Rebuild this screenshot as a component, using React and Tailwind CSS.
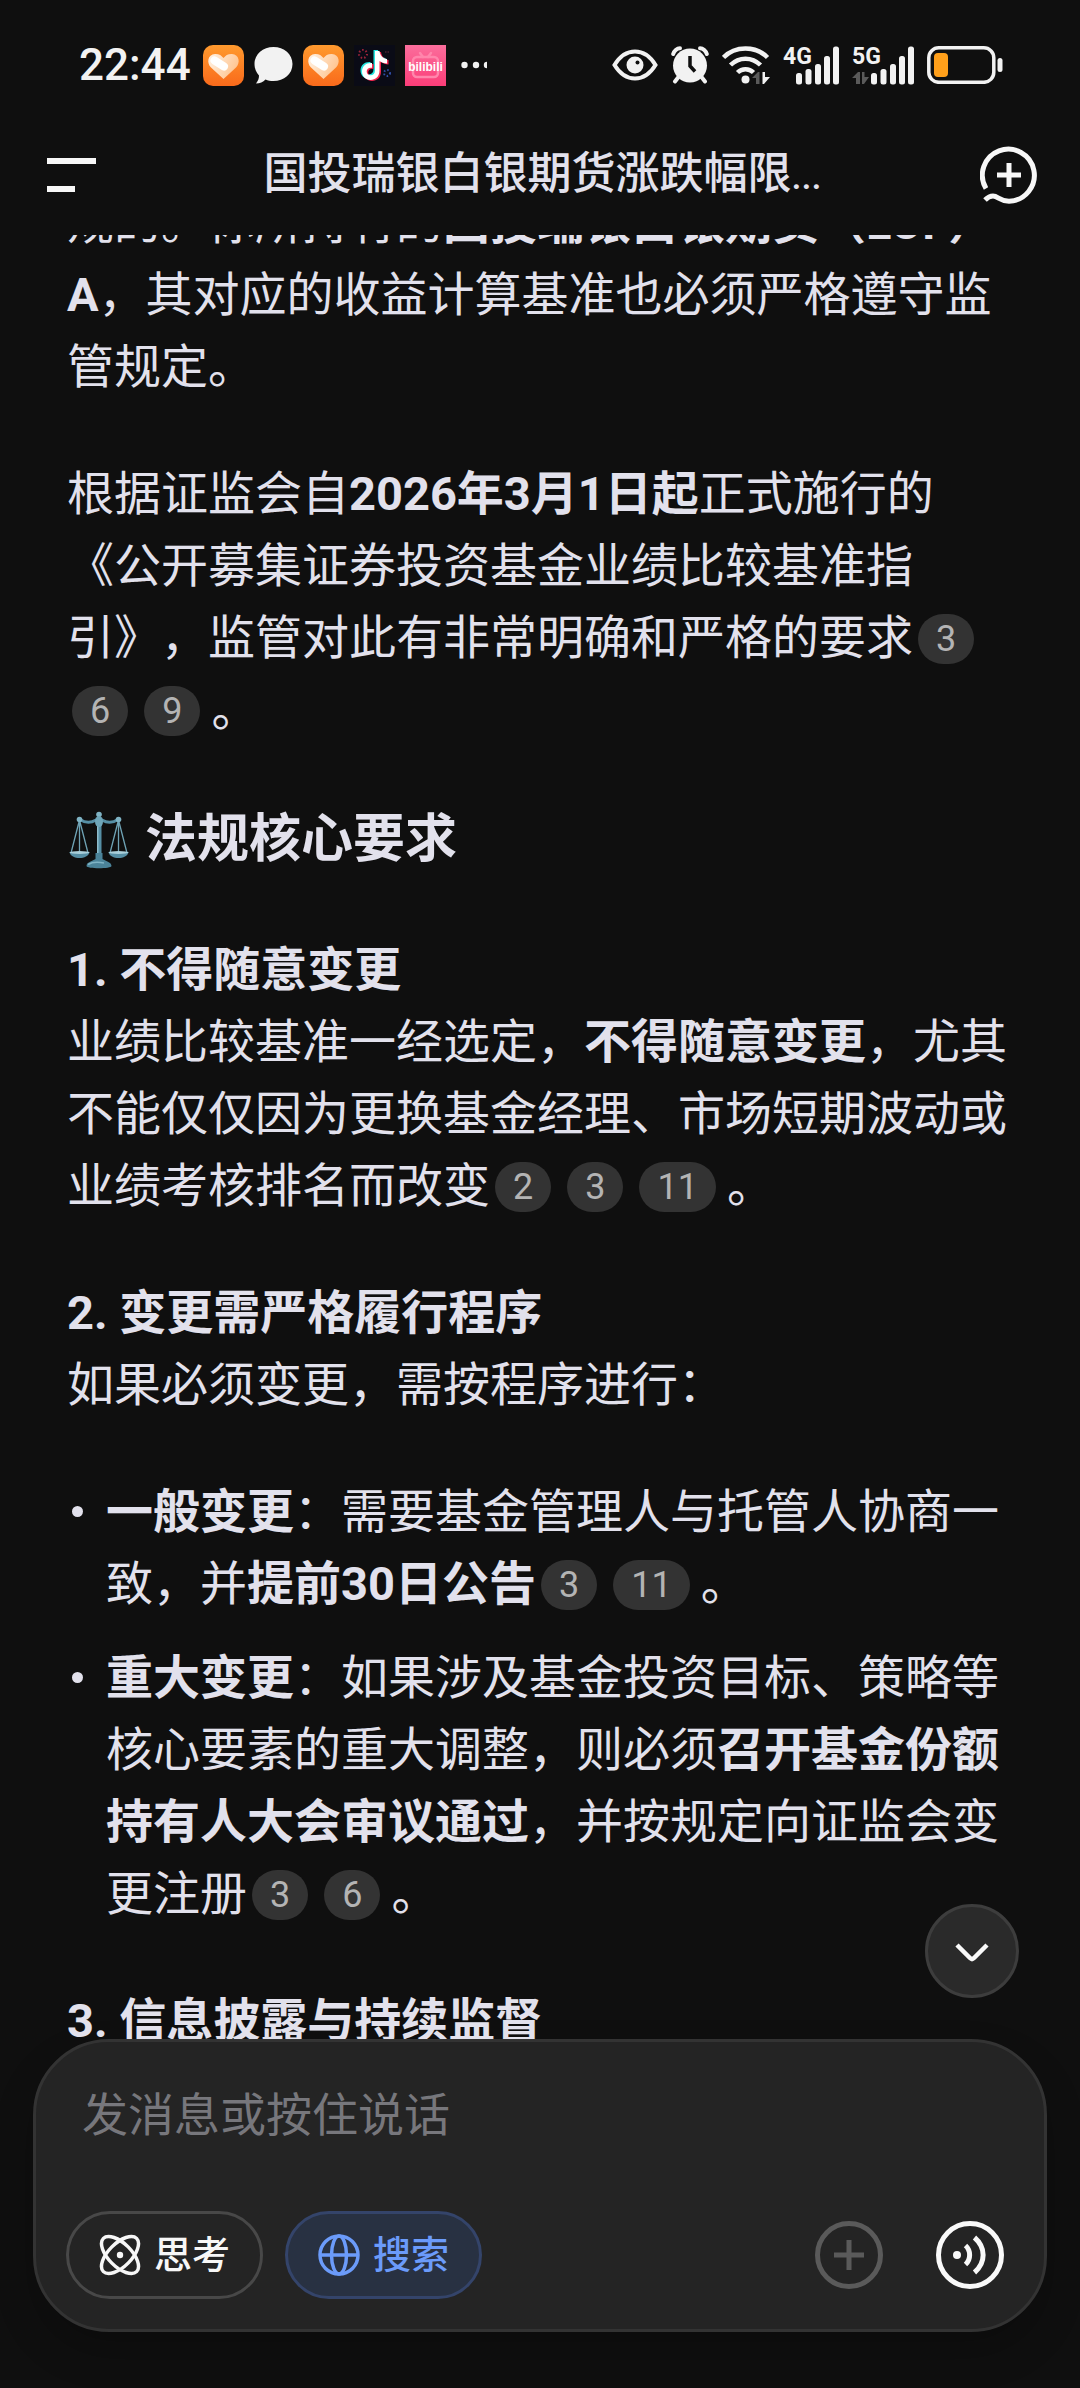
import { useState } from "react";

const HeartAppIcon = () => (
    <svg className="w-[41px] h-[41px]" viewBox="0 0 41 41">
        <defs>
            <linearGradient id="heartBg" x1="0" y1="0" x2="0" y2="1">
                <stop offset="0" stopColor="#ff9a2e" />
                <stop offset="1" stopColor="#f96a1b" />
            </linearGradient>
            <linearGradient id="heartFill" x1="0" y1="0" x2="1" y2="0.4">
                <stop offset="0" stopColor="#fff3e6" />
                <stop offset="1" stopColor="#ffc591" />
            </linearGradient>
        </defs>
        <rect width="41" height="41" rx="10" fill="url(#heartBg)" />
        <path
            d="M20.5 34 L8 22.5 C3.5 18 4.5 9.5 12 9 C16 8.8 18.5 10.5 20.5 13 C22.5 10.5 25 8.8 29 9 C36.5 9.5 37.5 18 33 22.5 Z"
            fill="url(#heartFill)"
        />
        <path d="M11.5 15.5 L21 21.5" stroke="#fff" strokeWidth="8" strokeLinecap="round" />
    </svg>
);

const BubbleIcon = () => (
    <svg className="w-[39px] h-[38px]" viewBox="0 0 39 38" fill="#f2f2f2">
        <path d="M19.5 1 C30 1 38.5 8 38.5 18 C38.5 28 30 35 19.5 35 C16.5 35 14 34.5 11.5 33.5 C9 36 6 37.5 2 37.5 C4 35 5 32.5 5 29.5 C2.2 26.5 0.5 22.5 0.5 18 C0.5 8 9 1 19.5 1 Z" />
    </svg>
);

const NOTE_PATH =
    "M21 6 H25.5 C26 10.5 29 13.5 33 14 V18.5 C30 18.5 27.5 17.5 25.5 16 V25.5 C25.5 31.5 21.5 35 16.5 35 C11.5 35 8 31 8 26.5 C8 21 12.5 17.5 18 18 V22.8 C15 22.2 12.7 24 12.7 26.5 C12.7 28.8 14.4 30.3 16.6 30.3 C19.2 30.3 21 28.5 21 25.5 Z";

const NoteAppIcon = () => (
    <svg className="w-[41px] h-[41px]" viewBox="0 0 41 41">
        <rect width="41" height="41" fill="#0a0b16" />
        <circle cx="9" cy="9" r="4" fill="none" stroke="#9c2439" strokeWidth="2" strokeDasharray="1.5 2" />
        <circle cx="33" cy="28" r="3" fill="none" stroke="#3250a8" strokeWidth="2" strokeDasharray="1.5 2" />
        <path d="M31 7 H36" stroke="#4a2030" strokeWidth="1.5" strokeDasharray="1.5 1" />
        <path d={NOTE_PATH} fill="#25e5e0" transform="translate(-1.5 -1)" />
        <path d={NOTE_PATH} fill="#f5264f" transform="translate(1.5 1)" />
        <path d={NOTE_PATH} fill="#fff" />
    </svg>
);

const TvAppIcon = () => (
    <svg className="w-[41px] h-[41px]" viewBox="0 0 41 41">
        <defs>
            <linearGradient id="tvBg" x1="0" y1="0" x2="0" y2="1">
                <stop offset="0" stopColor="#fb6e9c" />
                <stop offset="1" stopColor="#fb3d78" />
            </linearGradient>
        </defs>
        <rect width="41" height="41" fill="url(#tvBg)" />
        <g fill="none" stroke="#ff86ac" strokeWidth="2.5" strokeLinecap="round">
            <rect x="8" y="12" width="25" height="20" rx="4" />
            <path d="M15 8 L18 12 M26 8 L23 12" />
        </g>
        <text
            x="20.5"
            y="26"
            textAnchor="middle"
            fill="#fff"
            fontFamily="Liberation Sans, sans-serif"
            fontWeight="700"
            fontSize="12"
        >
            bilibili
        </text>
    </svg>
);

const EyeIcon = () => (
    <svg className="w-[46px] h-[32px]" viewBox="0 0 46 32">
        <path
            d="M2.5 16 C8 7 15 2.5 23 2.5 C31 2.5 38 7 43.5 16 C38 25 31 29.5 23 29.5 C15 29.5 8 25 2.5 16 Z"
            fill="none"
            stroke="#f2f2f2"
            strokeWidth="4"
        />
        <circle cx="23" cy="16" r="8.5" fill="#f2f2f2" />
        <circle cx="25.5" cy="13.5" r="2" fill="#0f0f0f" />
    </svg>
);

const AlarmIcon = () => (
    <svg className="w-[38px] h-[38px]" viewBox="0 0 38 38" stroke="#f2f2f2" strokeLinecap="round" fill="none">
        <circle cx="19" cy="19.5" r="17" fill="#f2f2f2" stroke="none" />
        <path d="M2.2 8 C3 5 6 2.2 9 2.2 M29 2.2 C32 2.2 35 5 35.8 8" strokeWidth="4" />
        <path d="M7.5 31 L4 35.5 M30.5 31 L34 35.5" strokeWidth="4" />
        <path d="M19 10 V20 L24 25.5" stroke="#0f0f0f" strokeWidth="3.5" strokeLinecap="butt" />
    </svg>
);

const WifiIcon = () => (
    <svg className="w-[48px] h-[38px]" viewBox="0 0 48 38">
        <g fill="none" stroke="#f2f2f2" strokeWidth="4.5">
            <path d="M1.5 11.5 C13 -0.5 34 -0.5 45.5 11.5" />
            <path d="M8.5 19 C17 10.5 30 10.5 38.5 19" />
            <path d="M15.5 26.5 C20 22 27 22 31.5 26.5" />
        </g>
        <circle cx="23.5" cy="33.5" r="4" fill="#f2f2f2" />
        <path d="M30 32 L36 26 H37.5 V38 H34 V32 Z" fill="#5a5a5a" />
        <path d="M40.5 26 H43 V31 H48 L42 38 H40.5 Z" fill="#f2f2f2" />
    </svg>
);

const SignalIcon = ({ label, width, offset, arrows }) => (
    <svg className="h-[39px]" width={width} viewBox={`0 0 ${width} 39`} fill="#f2f2f2">
        <text x="0" y="18" fontFamily="Roboto, sans-serif" fontWeight="700" fontSize="23">
            {label}
        </text>
        <rect x={offset} y="27" width="6" height="11.5" rx="2.5" />
        <rect x={offset + 9.5} y="23" width="6" height="15.5" rx="2.5" />
        <rect x={offset + 19} y="18" width="6" height="20.5" rx="2.5" />
        <rect x={offset + 28} y="10" width="6" height="28.5" rx="2.5" />
        <rect x={offset + 37} y="0.5" width="6" height="38" rx="2.5" />
        {arrows && <path d="M0 32 L6 26 H8 V38 H4 V32 Z M10 26 H12.5 V31 H17 L12 38 H10 Z" fill="#5a5a5a" />}
    </svg>
);

const BatteryIcon = () => (
    <svg className="w-[76px] h-[38px]" viewBox="0 0 76 38">
        <rect x="1.8" y="1.8" width="65" height="34.5" rx="10" fill="none" stroke="#f2f2f2" strokeWidth="3.5" />
        <rect x="7" y="7" width="14" height="24" rx="4" fill="#ff9f1a" />
        <rect x="70.5" y="12" width="5" height="14" rx="2.5" fill="#f2f2f2" />
    </svg>
);

const ScalesIcon = () => (
    <svg className="w-[64px] h-[60px] shrink-0" viewBox="-2 0 64 60" role="img" aria-label="⚖️">
        <g fill="none" stroke="#6fa3b5" strokeWidth="1.3">
            <path d="M10.5 10 L2 43 M10.5 10 L19 43 M10.5 10 V43" />
            <path d="M49.5 10 L41 43 M49.5 10 L58 43 M49.5 10 V43" />
        </g>
        <path d="M11 9.5 C17 13.5 22 13 27 10 H33 C38 13 43 13.5 49 9.5" fill="none" stroke="#568fa5" strokeWidth="3" />
        <rect x="28" y="9" width="4.5" height="36" fill="#568fa5" />
        <rect x="28" y="9" width="1.5" height="36" fill="#8dbccb" />
        <circle cx="30" cy="4.5" r="2.8" fill="#7fb3c4" />
        <ellipse cx="30" cy="11.5" rx="4" ry="5.5" fill="#6fa6b9" />
        <circle cx="10.5" cy="9.5" r="2.8" fill="#7fb3c4" />
        <circle cx="49.5" cy="9.5" r="2.8" fill="#7fb3c4" />
        <path d="M0.5 42 H20.5 C19 50 2 50 0.5 42 Z" fill="#568fa5" />
        <path d="M39.5 42 H59.5 C58 50 41 50 39.5 42 Z" fill="#568fa5" />
        <ellipse cx="10.5" cy="42.5" rx="10" ry="1.5" fill="#a9cfda" />
        <ellipse cx="49.5" cy="42.5" rx="10" ry="1.5" fill="#a9cfda" />
        <path d="M26.5 43 H33.5 V49 C37 51.5 42.5 52 42.5 56 C42.5 59 17.5 59 17.5 56 C17.5 52 23 51.5 26.5 49 Z" fill="#4b8399" />
        <path d="M19 54.5 C24 51.5 30 52 35 53" fill="none" stroke="#7fb3c4" strokeWidth="1.5" />
    </svg>
);

const NewChatIcon = () => (
    <svg className="w-[58px] h-[58px]" viewBox="0 0 58 58" fill="none" stroke="#f7f7f7" strokeWidth="5">
        <path d="M6 42.5 A26 26 0 1 1 29 55.2 C20 55.2 18 50 13 50 C9 50 7.5 51.5 5 54" />
        <path d="M29 17 V41 M17 29 H41" />
    </svg>
);

const ThinkIcon = () => (
    <svg className="w-[42px] h-[42px]" viewBox="0 0 42 42" fill="none" stroke="#f7f7f7" strokeWidth="3.5">
        <ellipse cx="21" cy="21" rx="23.5" ry="11.5" transform="rotate(45 21 21)" />
        <ellipse cx="21" cy="21" rx="23.5" ry="11.5" transform="rotate(-45 21 21)" />
        <circle cx="21" cy="21" r="3.2" fill="#f7f7f7" stroke="none" />
    </svg>
);

const GlobeIcon = () => (
    <svg className="w-[42px] h-[42px]" viewBox="0 0 42 42" fill="none" stroke="#6b9bfa" strokeWidth="3.5">
        <circle cx="21" cy="21" r="19" />
        <ellipse cx="21" cy="21" rx="7.5" ry="19" />
        <path d="M2 21 H40" />
    </svg>
);

const VoiceIcon = () => (
    <svg className="w-[68px] h-[68px]" viewBox="0 0 68 68" fill="none" stroke="#f9f9f9" strokeWidth="5">
        <circle cx="34" cy="34" r="31.5" />
        <circle cx="21" cy="34" r="4" fill="#f9f9f9" stroke="none" />
        <path d="M29.5 24.5 C35 29.5 35 38.5 29.5 43.5" />
        <path d="M38.5 16.5 C50 26.5 50 41.5 38.5 51.5" />
    </svg>
);

const AddIcon = () => (
    <svg className="w-[68px] h-[68px]" viewBox="0 0 68 68" fill="none" stroke="#5a5a5a" strokeWidth="5">
        <circle cx="34" cy="34" r="31.5" />
        <path d="M34 19 V49 M19 34 H49" />
    </svg>
);

// Source reference pills
const Cite = ({ refs }) =>
    refs.map((n) => (
        <button
            key={n}
            type="button"
            className="inline-block align-middle h-[50px] px-[18px] ml-[5px] mr-[11px] mb-[5px] rounded-full bg-[#333333] text-[36px] leading-[50px] text-[#b4b4b4]"
        >
            {n}
        </button>
    ));

const StatusBar = () => (
    <div className="h-[130px] pl-[79px] pr-[77px] flex items-center justify-between shrink-0 text-[#f2f2f2]">
        <div className="flex items-center gap-[10px]">
            <span className="font-medium text-[44px] leading-none mr-0.5">22:44</span>
            <HeartAppIcon />
            <BubbleIcon />
            <HeartAppIcon />
            <NoteAppIcon />
            <TvAppIcon />
            <svg className="w-[26px] h-[8px] ml-[5px]" viewBox="0 0 26 8" fill="#f2f2f2">
                <circle cx="3.5" cy="4" r="3.2" />
                <circle cx="15" cy="4" r="3.2" />
                <circle cx="26" cy="4" r="3.2" />
            </svg>
        </div>
        <div className="flex items-center gap-[13px]">
            <EyeIcon />
            <AlarmIcon />
            <WifiIcon />
            <SignalIcon label="4G" width={56} offset={13} />
            <SignalIcon label="5G" width={62} offset={19} arrows />
            <BatteryIcon />
        </div>
    </div>
);

const Header = () => (
    <header className="h-[90px] mb-[15px] pl-[47px] pr-[42px] flex items-center justify-between shrink-0">
        <button type="button" aria-label="菜单" className="w-[58px] h-[34px] flex flex-col justify-between">
            <span className="w-[49px] h-[6px] bg-[#f7f7f7]" />
            <span className="w-[28px] h-[6px] bg-[#f7f7f7]" />
        </button>
        <h1 className="text-[44px] leading-[60px] font-medium text-[#e2e1ec]">
            国投瑞银白银期货涨跌幅限<span className="text-[36px]">...</span>
        </h1>
        <button type="button" aria-label="新对话">
            <NewChatIcon />
        </button>
    </header>
);

const Bullet = ({ children }) => (
    <li className="flex">
        <span className="w-[11px] h-[11px] mt-[30px] ml-[5px] mr-[23px] rounded-full bg-[#e2e1ec] shrink-0" />
        <div>{children}</div>
    </li>
);

const Message = () => (
    <article className="-mt-[48px] px-[67px] space-y-[55px] text-[47px] leading-[72px] text-[#e2e1ec]">
        <p>
            规的。你所持有的<strong>国投瑞银白银期货（LOF）A</strong>，其对应的收益计算基准也必须严格遵守监管规定。
        </p>
        <p>
            根据证监会自<strong>2026年3月1日起</strong>正式施行的《公开募集证券投资基金业绩比较基准指引》，监管对此有非常明确和严格的要求
            <Cite refs={[3, 6, 9]} />。
        </p>
        <h2 className="flex items-center gap-[14px] text-[52px] leading-[78px] font-bold">
            <ScalesIcon />
            法规核心要求
        </h2>
        <p>
            <strong>1. 不得随意变更</strong>
            <br />
            业绩比较基准一经选定，<strong>不得随意变更</strong>，尤其不能仅仅因为更换基金经理、市场短期波动或业绩考核排名而改变
            <Cite refs={[2, 3, 11]} />。
        </p>
        <p>
            <strong>2. 变更需严格履行程序</strong>
            <br />
            如果必须变更，需按程序进行：
        </p>
        <ul className="space-y-[22px]">
            <Bullet>
                <strong>一般变更</strong>：需要基金管理人与托管人协商一致，并<strong>提前30日公告</strong>
                <Cite refs={[3, 11]} />。
            </Bullet>
            <Bullet>
                <strong>重大变更</strong>：如果涉及基金投资目标、策略等核心要素的重大调整，则必须
                <strong>召开基金份额持有人大会审议通过</strong>，并按规定向证监会变更注册
                <Cite refs={[3, 6]} />。
            </Bullet>
        </ul>
        <p>
            <strong>3. 信息披露与持续监督</strong>
        </p>
    </article>
);

const Composer = () => {
    const [text, setText] = useState("");
    const [think, setThink] = useState(false);
    const [search, setSearch] = useState(true);

    return (
        <footer className="mx-[33px] mb-[56px] h-[293px] pt-[39px] pb-[30px] pl-[30px] pr-[40px] flex flex-col justify-between shrink-0 rounded-[76px] border-[3px] border-[#333333] bg-[#242424] shadow-[0_20px_40px_rgba(0,0,0,0.2)]">
            <input
                type="text"
                aria-label="发消息或按住说话"
                placeholder="发消息或按住说话"
                value={text}
                onChange={(e) => setText(e.target.value)}
                className="w-full h-[68px] px-[16px] bg-transparent outline-none text-[46px] text-[#e2e1ec] placeholder:text-[#77777c]"
            />
            <div className="flex items-center">
                <button
                    type="button"
                    aria-pressed={think}
                    onClick={() => setThink(!think)}
                    className="h-[88px] px-[30px] flex items-center gap-[13px] rounded-full border-[3px] border-[#484848] text-[38px] font-medium text-[#f7f7f7]"
                >
                    <ThinkIcon />
                    思考
                </button>
                <button
                    type="button"
                    aria-pressed={search}
                    onClick={() => setSearch(!search)}
                    className="h-[88px] px-[30px] ml-[22px] flex items-center gap-[13px] rounded-full border-[3px] border-[#34446a] bg-[#283142] text-[38px] font-medium text-[#6b9bfa]"
                >
                    <GlobeIcon />
                    搜索
                </button>
                <button type="button" aria-label="添加" className="ml-auto mr-[53px]">
                    <AddIcon />
                </button>
                <button type="button" aria-label="语音">
                    <VoiceIcon />
                </button>
            </div>
        </footer>
    );
};

const App = () => (
    <div className="h-screen flex flex-col overflow-hidden bg-[#0f0f0f] font-[Roboto,'Noto_Sans_CJK_SC',sans-serif] [text-spacing-trim:space-all]">
        <StatusBar />
        <Header />
        <main className="relative flex-1 min-h-0">
            <div className="h-full overflow-hidden">
                <Message />
            </div>
            <button
                type="button"
                aria-label="滚动到底部"
                className="absolute right-[61px] bottom-[41px] w-[94px] h-[94px] flex items-center justify-center rounded-full border-[3px] border-[#3d3d3d] bg-[#2a2a2a]"
            >
                <svg className="w-[36px] h-[20px] mt-1" viewBox="0 0 36 20" fill="none" stroke="#f9f9f9" strokeWidth="4.5">
                    <path d="M3 2 L16 15 Q18 17 20 15 L33 2" />
                </svg>
            </button>
        </main>
        <Composer />
    </div>
);

export default App;
